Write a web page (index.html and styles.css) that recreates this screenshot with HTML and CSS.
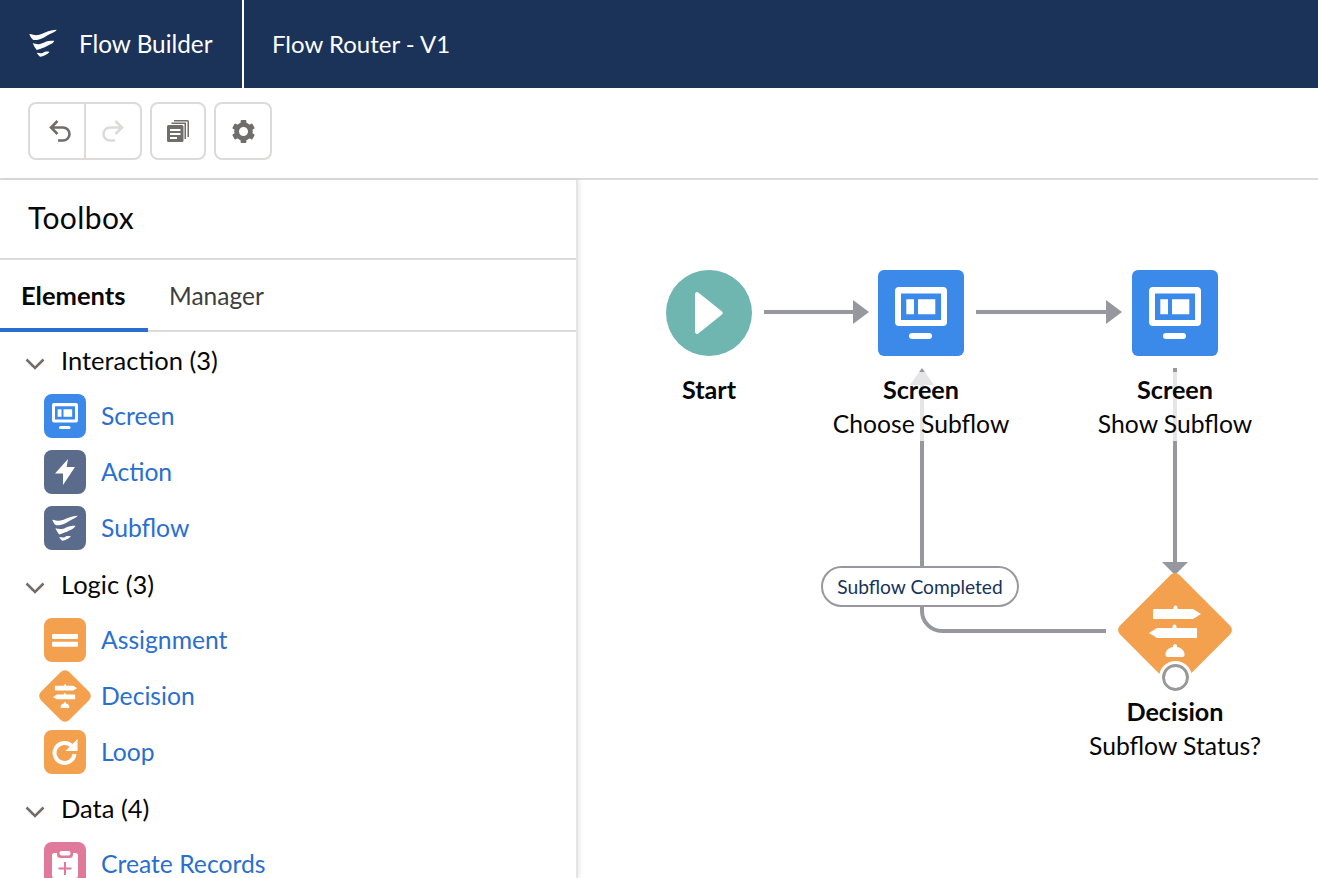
FILE: index.html
```html
<!DOCTYPE html>
<html>
  <head>
    <title>Flow Builder</title>
    <link rel="stylesheet" href="styles.css">
  </head>

  <body>
    <svg class="defs" width="0" height="0">
      <symbol id="waves" viewBox="0 0 28 28">
        <path d="M.3 5C4 5.500 6 6.500 9.300 6 14 5 17 2.500 22 1.500 24 1 26 1 27.700.8 27 2.500 24 3.500 21 5 17 7 14 9.500 10 10.500 8 11 6 11.200 4.300 11 2.500 9.500 1.300 7.500.3 5z"/>
        <path d="M3.700 14.300C6 14.800 8.500 15.500 11 15 14 14.400 16.500 12.500 19.300 12 21.300 11.700 23.300 11.700 25.300 11.700 24.700 13.300 23.500 14.300 22 15 19 16.300 17 17.800 14.300 18.700 12 19.600 10 20.500 7.700 21 6 19 4.700 16.700 3.700 14.300z"/>
        <path d="M7.700 23.700C9.300 23.700 11 24.600 12.700 24.300 14 24 15 23 16 22.700 17.500 22.500 19 22.600 20.300 22.700 19.700 24 18.700 24.800 17.700 25.300 16.500 26 15.500 26.500 14.300 27 13.200 27.400 12 27.600 11 27.700 9.500 26.500 8.500 25.200 7.700 23.700z"/>
      </symbol>
      <symbol id="monitor" viewBox="0 0 52 52">
        <path fill-rule="evenodd" d="M4 0h44a4 4 0 0 1 4 4v31a4 4 0 0 1-4 4H4a4 4 0 0 1-4-4V4a4 4 0 0 1 4-4zm2 6.500V33h40V6.500zM11.300 12.300H19v15h-7.700zM23 12.300h17.300v15H23z"/>
        <rect x="14" y="46" width="23" height="6" rx="3"/>
      </symbol>
      <symbol id="signpost" viewBox="0 0 52 52">
        <path d="M5 4h19.500V2.500a2 2 0 0 1 4 0V4H44l8 5-8 5H5a1 1 0 0 1-1-1V5a1 1 0 0 1 1-1z"/>
        <path d="M47 23H27.500v-1.500a2 2 0 0 0-4 0V23H8l-8 5 8 5h39a1 1 0 0 0 1-1v-8a1 1 0 0 0-1-1z"/>
        <path d="M24 41a2 2 0 0 1 4 0v1c4 .5 7 3 7.500 7 .2 2-.5 3-2 3h-15c-1.500 0-2.200-1-2-3 .5-4 3.500-6.500 7.500-7z"/>
      </symbol>
    </svg>

    <header class="topbar">
      <div class="app-name">
        <svg class="app-logo"><use href="#waves"/></svg>
        <span>Flow Builder</span>
      </div>
      <div class="flow-name">Flow Router - V1</div>
    </header>

    <div class="toolbar">
      <div class="btn-group">
        <button class="tool-btn undo">
          <svg class="tool-icon" viewBox="0 0 24 24" fill="none" stroke="#706e6b" stroke-width="2.600">
            <path d="M9.500 2 3 8.500 9.500 15M3.500 8.500H15a6.500 6.500 0 0 1 0 13h-5"/>
          </svg>
        </button>
        <button class="tool-btn redo">
          <svg class="tool-icon" viewBox="0 0 24 24" fill="none" stroke="#dddbda" stroke-width="2.600">
            <path d="M14.500 2 21 8.500 14.500 15M20.500 8.500H9a6.500 6.500 0 0 0 0 13h5"/>
          </svg>
        </button>
      </div>
      <button class="tool-btn single">
        <svg class="tool-icon copy" viewBox="0 0 22 22">
          <path fill="#706e6b" d="M7 0h13.500A1.500 1.500 0 0 1 22 1.500V17h-1.500V1.500H7z"/>
          <path fill="#706e6b" d="M4.500 2.500H19V19h-1.500V4H4.500z"/>
          <path fill="#706e6b" fill-rule="evenodd" d="M1.500 5H15a1.500 1.500 0 0 1 1.500 1.500v14A1.500 1.500 0 0 1 15 22H1.500A1.500 1.500 0 0 1 0 20.500v-14A1.500 1.500 0 0 1 1.500 5zM3 9v2h10.500V9zm0 4v2h10.500v-2zm0 4v2h7v-2z"/>
        </svg>
      </button>
      <button class="tool-btn single wide">
        <svg class="tool-icon gear" viewBox="0 0 24 24" fill="#706e6b">
          <circle cx="12" cy="12" r="7.200" fill="none" stroke="#706e6b" stroke-width="5"/>
          <rect x="9" y="0" width="6" height="6" rx="1"/>
          <rect x="9" y="0" width="6" height="6" rx="1" transform="rotate(60 12 12)"/>
          <rect x="9" y="0" width="6" height="6" rx="1" transform="rotate(120 12 12)"/>
          <rect x="9" y="0" width="6" height="6" rx="1" transform="rotate(180 12 12)"/>
          <rect x="9" y="0" width="6" height="6" rx="1" transform="rotate(240 12 12)"/>
          <rect x="9" y="0" width="6" height="6" rx="1" transform="rotate(300 12 12)"/>
        </svg>
      </button>
    </div>

    <div class="main">
      <aside class="toolbox">
        <h2 class="toolbox-title">Toolbox</h2>
        <div class="tabs">
          <div class="tab active">Elements</div>
          <div class="tab">Manager</div>
        </div>

        <div class="palette">
          <section class="group">
            <div class="group-head">
              <svg class="chevron" viewBox="0 0 20 12"><path d="M1.500 1.500 10 10l8.500-8.500"/></svg>
              <span>Interaction (3)</span>
            </div>
            <a class="item">
              <span class="icon blue"><svg class="glyph"><use href="#monitor"/></svg></span>
              <span class="text">Screen</span>
            </a>
            <a class="item">
              <span class="icon slate">
                <svg class="glyph" viewBox="0 0 26 26"><path d="M16 0 3 14.500h8V26L23 8h-8.400z"/></svg>
              </span>
              <span class="text">Action</span>
            </a>
            <a class="item">
              <span class="icon slate"><svg class="glyph"><use href="#waves"/></svg></span>
              <span class="text">Subflow</span>
            </a>
          </section>

          <section class="group">
            <div class="group-head">
              <svg class="chevron" viewBox="0 0 20 12"><path d="M1.500 1.500 10 10l8.500-8.500"/></svg>
              <span>Logic (3)</span>
            </div>
            <a class="item">
              <span class="icon orange">
                <svg class="glyph" viewBox="0 0 26 26"><rect y="7" width="26" height="5" rx="1"/><rect y="14.700" width="26" height="5" rx="1"/></svg>
              </span>
              <span class="text">Assignment</span>
            </a>
            <a class="item">
              <span class="icon diamond-wrap">
                <span class="diamond"></span>
                <svg class="glyph small"><use href="#signpost"/></svg>
              </span>
              <span class="text">Decision</span>
            </a>
            <a class="item">
              <span class="icon orange">
                <svg class="glyph" viewBox="0 0 26 26">
                  <path d="M19.500 6.800A10 10 0 1 0 22.500 15" fill="none" stroke="#fff" stroke-width="4"/>
                  <path d="M25.500 0v12h-12z"/>
                </svg>
              </span>
              <span class="text">Loop</span>
            </a>
          </section>

          <section class="group">
            <div class="group-head">
              <svg class="chevron" viewBox="0 0 20 12"><path d="M1.500 1.500 10 10l8.500-8.500"/></svg>
              <span>Data (4)</span>
            </div>
            <a class="item">
              <span class="icon pink">
                <svg class="glyph tall" viewBox="0 0 26 28">
                  <rect y="3" width="26" height="25" rx="2.500" fill="#fff"/>
                  <rect x="5" y="-1" width="16" height="9" rx="3.500" fill="#e0799a"/>
                  <rect x="7.500" y="1" width="11" height="4.500" rx="2" fill="#fff"/>
                  <path d="M12 12h2v5.500h5.500v2H14V25h-2v-5.500H6.500v-2H12z" fill="#e0799a"/>
                </svg>
              </span>
              <span class="text">Create Records</span>
            </a>
          </section>
        </div>
      </aside>

      <div class="canvas">
        <svg class="edges" width="740" height="698" fill="none">
          <g stroke="#97979f" stroke-width="4">
            <path d="M186 132h92"/>
            <path d="M398 132h132"/>
            <path d="M597 188v196"/>
            <path d="M344 205v226a20 20 0 0 0 20 20h164"/>
          </g>
          <g fill="#97979f">
            <path d="M275 120l16 12-16 12z"/>
            <path d="M528 120l16 12-16 12z"/>
            <path d="M584 382h26l-13 13z"/>
            <path d="M332 205l12-17 12 17z"/>
          </g>
        </svg>

        <div class="node start-node">
          <div class="start-shape">
            <svg class="play" viewBox="0 0 28 42"><path d="M0 2a2 2 0 0 1 3.300-1.500l23.700 19a2 2 0 0 1 0 3L3.300 41.500A2 2 0 0 1 0 40z"/></svg>
          </div>
          <div class="node-label"><b>Start</b></div>
        </div>

        <div class="node screen-one">
          <div class="screen-shape"><svg class="screen-glyph"><use href="#monitor"/></svg></div>
          <div class="node-label"><b>Screen</b><span>Choose Subflow</span></div>
        </div>

        <div class="node screen-two">
          <div class="screen-shape"><svg class="screen-glyph"><use href="#monitor"/></svg></div>
          <div class="node-label"><b>Screen</b><span>Show Subflow</span></div>
        </div>

        <div class="pill">Subflow Completed</div>

        <div class="node decision-node">
          <div class="decision-shape">
            <span class="decision-bg"></span>
            <svg class="decision-glyph"><use href="#signpost"/></svg>
            <span class="port"></span>
          </div>
          <div class="node-label"><b>Decision</b><span>Subflow Status?</span></div>
        </div>
      </div>
    </div>
  </body>
</html>
```

FILE: styles.css
```css
* {
  box-sizing: border-box;
}

html,
body {
  height: 878px;
  margin: 0;
  overflow: hidden;
}

body {
  font-family: Lato, "Noto Sans", sans-serif;
  color: #080707;
  background-color: #fff;
}

.defs {
  position: absolute;
}

.topbar {
  display: flex;
  height: 88px;
  background-color: #1b3359;
  color: #fff;
  font-size: 24.300px;
}

.app-name {
  display: flex;
  align-items: center;
  width: 244px;
  padding-left: 29px;
  padding-bottom: 2px;
  border-right: 2px solid #fff;
}

.app-logo {
  width: 28px;
  height: 28px;
  margin-right: 22px;
  fill: #fff;
}

.flow-name {
  display: flex;
  align-items: center;
  padding-left: 28px;
  padding-bottom: 2px;
  font-size: 24px;
}

.toolbar {
  display: flex;
  align-items: center;
  gap: 8px;
  height: 92px;
  padding: 0 28px 4px;
  border-bottom: 2px solid #dddbda;
}

.btn-group {
  display: flex;
  border: 2px solid #dddbda;
  border-radius: 8px;
}

.tool-btn {
  display: flex;
  align-items: center;
  justify-content: center;
  width: 55px;
  height: 54px;
  padding: 0;
  border: none;
  background: none;
}

.tool-btn.undo {
  width: 54px;
  padding-left: 5px;
}

.tool-btn.redo {
  width: 56px;
  border-left: 2px solid #dddbda;
}

.tool-btn.single {
  width: 56px;
  height: 58px;
  border: 2px solid #dddbda;
  border-radius: 8px;
}

.tool-btn.wide {
  width: 58px;
}

.tool-icon {
  width: 24px;
  height: 24px;
}

.tool-icon.copy {
  width: 22px;
  height: 22px;
}

.tool-icon.gear {
  width: 23px;
  height: 23px;
}

.main {
  display: flex;
  height: 698px;
}

.toolbox {
  position: relative;
  flex: none;
  width: 578px;
  border-right: 2px solid #e4e4e4;
  box-shadow: 2px 0 4px rgba(0, 0, 0, 0.08);
  overflow: hidden;
}

.toolbox-title {
  display: flex;
  align-items: center;
  height: 80px;
  margin: 0;
  padding: 0 28px 4px;
  border-bottom: 2px solid #dddbda;
  font-size: 30px;
  font-weight: 400;
  letter-spacing: 0.4px;
}

.tabs {
  display: flex;
  height: 72px;
  border-bottom: 2px solid #dddbda;
  font-size: 24.500px;
}

.tab {
  display: flex;
  align-items: center;
  padding-left: 21px;
  color: #3e3e3c;
}

.tab.active {
  width: 148px;
  height: 72px;
  padding-top: 2px;
  border-bottom: 4px solid #2a6fcf;
  color: #080707;
  font-size: 25.500px;
  font-weight: 700;
}

.group {
  height: 224px;
}

.group-head {
  display: flex;
  align-items: center;
  height: 56px;
  padding-left: 25px;
  font-size: 25.500px;
}

.text {
  padding-bottom: 2px;
}

.chevron {
  width: 20px;
  height: 12px;
  margin-top: 8px;
  margin-right: 16px;
  fill: none;
  stroke: #706e6b;
  stroke-width: 2.500;
}

.item {
  display: flex;
  align-items: center;
  gap: 15px;
  height: 56px;
  padding-left: 44px;
  color: #2a6fcf;
  font-size: 24.700px;
}

.icon {
  display: flex;
  align-items: center;
  justify-content: center;
  position: relative;
  width: 42px;
  height: 44px;
  border-radius: 8px;
  fill: #fff;
}

.blue {
  background-color: #3b89e8;
}

.slate {
  background-color: #5b6b8c;
}

.orange {
  background-color: #f4a14f;
}

.pink {
  background-color: #e0799a;
}

.glyph {
  width: 26px;
  height: 26px;
}

.glyph.tall {
  height: 28px;
}

.glyph.small {
  position: relative;
  width: 24px;
  height: 24px;
}

.diamond-wrap {
  background: none;
}

.diamond {
  position: absolute;
  left: 1px;
  top: 2px;
  width: 40px;
  height: 40px;
  border-radius: 6px;
  background-color: #f4a14f;
  transform: rotate(45deg);
}

.canvas {
  position: relative;
  flex: 1;
}

.edges {
  position: absolute;
  left: 0;
  top: 0;
}

.node {
  position: absolute;
  display: flex;
  flex-direction: column;
  align-items: center;
  width: 240px;
}

.start-node {
  left: 11px;
  top: 90px;
}

.screen-one {
  left: 223px;
  top: 90px;
}

.screen-two {
  left: 477px;
  top: 90px;
}

.decision-node {
  left: 477px;
  top: 392px;
}

.start-shape {
  display: flex;
  align-items: center;
  justify-content: center;
  width: 86px;
  height: 86px;
  border-radius: 50%;
  background-color: #6fb5b0;
}

.play {
  width: 28px;
  height: 42px;
  fill: #fff;
}

.screen-shape {
  display: flex;
  align-items: center;
  justify-content: center;
  width: 86px;
  height: 86px;
  border-radius: 6px;
  background-color: #3b89e8;
  fill: #fff;
}

.screen-glyph {
  width: 52px;
  height: 52px;
}

.node-label {
  display: flex;
  flex-direction: column;
  align-items: center;
  margin-top: 16px;
  background-color: rgba(255, 255, 255, 0.75);
  font-size: 24.700px;
  line-height: 34px;
  white-space: nowrap;
}

.node-label b {
  font-size: 25.200px;
}

.node-label span {
  padding-top: 1px;
}

.pill {
  position: absolute;
  left: 243px;
  top: 386px;
  display: flex;
  align-items: center;
  justify-content: center;
  width: 198px;
  height: 41px;
  border: 2px solid #97979f;
  border-radius: 21px;
  background-color: #fff;
  color: #16325c;
  font-size: 19.200px;
}

.decision-shape {
  position: relative;
  display: flex;
  align-items: center;
  justify-content: center;
  width: 116px;
  height: 116px;
  fill: #fff;
}

.decision-bg {
  position: absolute;
  left: 16px;
  top: 16px;
  width: 84px;
  height: 84px;
  border-radius: 6px;
  background-color: #f4a14f;
  transform: rotate(45deg);
}

.decision-glyph {
  position: relative;
  width: 52px;
  height: 52px;
  margin-top: 2px;
}

.port {
  position: absolute;
  left: 45px;
  top: 92px;
  width: 27px;
  height: 27px;
  border: 3px solid #999;
  border-radius: 50%;
  outline: 3px solid #fff;
  background-color: #fff;
}

.decision-node .node-label {
  margin-top: 6px;
  background: none;
}
```
